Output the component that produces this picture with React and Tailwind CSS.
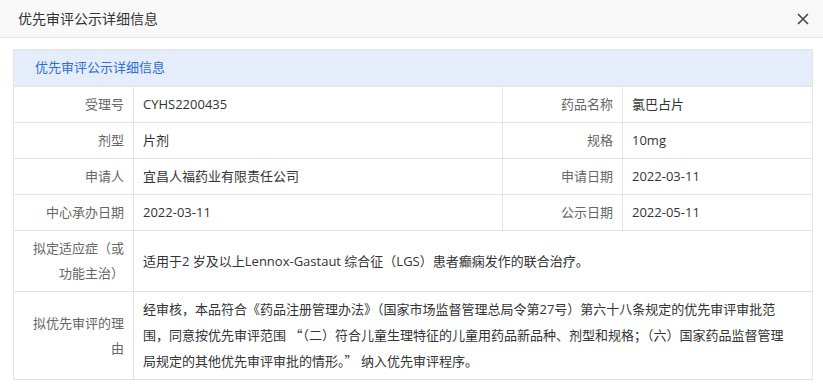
import React from "react";

const font = { fontFamily: '"Open Sans", "Noto Sans CJK SC", sans-serif' };

function Label({ children }) {
  return (
    <td className="w-[120px] border border-[#e3e3e3] py-[5px] pl-[10px] pr-[9px] text-right align-middle text-[13px] leading-[25px] text-[#666]">
      {children}
    </td>
  );
}

function Value({ children, colSpan, className = "" }) {
  return (
    <td
      colSpan={colSpan}
      className={`border border-[#e3e3e3] py-[5px] pl-[9px] pr-[10px] text-left align-middle text-[13px] leading-[25px] text-[#333] ${className}`}
    >
      {children}
    </td>
  );
}

function Q({ children }) {
  return <span className="font-['Noto_Sans_CJK_SC',sans-serif]">{children}</span>;
}

export default function App() {
  return (
    <div className="h-[385px] w-[823px] overflow-hidden bg-white" style={font}>
      <div className="flex h-[38px] items-center justify-between border-b border-[#e8e8e8] bg-[#f8f8f8] pl-[18px] pr-[14px]">
        <span className="text-[14px] text-[#333]">优先审评公示详细信息</span>
        <svg width="12" height="12" viewBox="0 0 12 12" className="text-[#444]">
          <path d="M1 1 L11 11 M11 1 L1 11" stroke="currentColor" strokeWidth="1.6" />
        </svg>
      </div>
      <div className="pl-[13px] pr-[11px] pt-[11px]">
        <table className="w-[799px] table-fixed border-collapse">
          <colgroup>
            <col className="w-[120px]" />
            <col className="w-[369px]" />
            <col className="w-[120px]" />
            <col className="w-[190px]" />
          </colgroup>
          <tbody>
            <tr>
              <td
                colSpan={4}
                className="h-[37px] border border-[#e3e3e3] bg-[#e5edfa] pl-[21px] text-[13px] text-[#2e6fd6]"
              >
                优先审评公示详细信息
              </td>
            </tr>
            <tr>
              <Label>受理号</Label>
              <Value>CYHS2200435</Value>
              <Label>药品名称</Label>
              <Value>氯巴占片</Value>
            </tr>
            <tr>
              <Label>剂型</Label>
              <Value>片剂</Value>
              <Label>规格</Label>
              <Value>10mg</Value>
            </tr>
            <tr>
              <Label>申请人</Label>
              <Value>宜昌人福药业有限责任公司</Value>
              <Label>申请日期</Label>
              <Value>2022-03-11</Value>
            </tr>
            <tr>
              <Label>中心承办日期</Label>
              <Value>2022-03-11</Value>
              <Label>公示日期</Label>
              <Value>2022-05-11</Value>
            </tr>
            <tr>
              <Label>拟定适应症（或功能主治）</Label>
              <Value colSpan={3}>
                适用于2 岁及以上Lennox-Gastaut 综合征（LGS）患者癫痫发作的联合治疗。
              </Value>
            </tr>
            <tr>
              <Label>拟优先审评的理由</Label>
              <Value colSpan={3}>
                <span className="whitespace-nowrap">经审核，本品符合《药品注册管理办法》（国家市场监督管理总局令第27号）第六十八条规定的优先审评审批范</span>
                <br />
                <span className="whitespace-nowrap">
                  围，同意按优先审评范围 <Q>“</Q>（二）符合儿童生理特征的儿童用药品新品种、剂型和规格；（六）国家药品监督管理
                </span>
                <br />
                <span className="whitespace-nowrap">
                  局规定的其他优先审评审批的情形。<Q>”</Q> 纳入优先审评程序。
                </span>
              </Value>
            </tr>
          </tbody>
        </table>
      </div>
    </div>
  );
}
